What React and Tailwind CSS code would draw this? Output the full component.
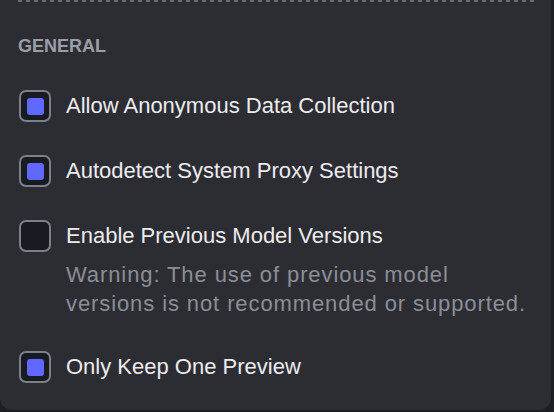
import React from "react";

const items = [
  { label: "Allow Anonymous Data Collection", checked: true },
  { label: "Autodetect System Proxy Settings", checked: true },
  {
    label: "Enable Previous Model Versions",
    checked: false,
    warning: "Warning: The use of previous model versions is not recommended or supported.",
  },
  { label: "Only Keep One Preview", checked: true },
];

function Checkbox({ checked }) {
  return (
    <div className="flex h-[32px] w-[32px] shrink-0 items-center justify-center rounded-[7px] border-2 border-[#7d8088] bg-[#191b22]">
      {checked && <div className="h-[17px] w-[17px] rounded-[3px] bg-[#6068ff]" />}
    </div>
  );
}

export default function App() {
  return (
    <div className="h-[412px] w-[554px] bg-[#1d1e22]" style={{ fontFamily: '"Liberation Sans", Arial, sans-serif' }}>
      <div className="flex h-[410px] w-[551px] flex-col rounded-b-[12px] bg-[#2c2d33] pl-[18px] pr-[21px]">
        <div className="h-[2px] w-[517px] bg-[repeating-linear-gradient(to_right,#6a6d74_0px,#6a6d74_4px,transparent_4px,transparent_8px)]" />
        <h2 className="mt-[32px] text-[18px] font-bold leading-[24px] text-[#9a9ea6]">GENERAL</h2>
        <div className="mt-[32px] flex flex-col gap-[33px]">
          {items.map((it) => (
            <div key={it.label} className="flex items-start gap-[15px] pl-[1px]">
              <Checkbox checked={it.checked} />
              <div className="flex flex-col">
                <div className="text-[22px] leading-[32px] text-[#ececef]">{it.label}</div>
                {it.warning && (
                  <div className="mt-[8px] text-[22px] leading-[29px] tracking-[0.9px] text-[#8b8e96]">{it.warning}</div>
                )}
              </div>
            </div>
          ))}
        </div>
      </div>
    </div>
  );
}
